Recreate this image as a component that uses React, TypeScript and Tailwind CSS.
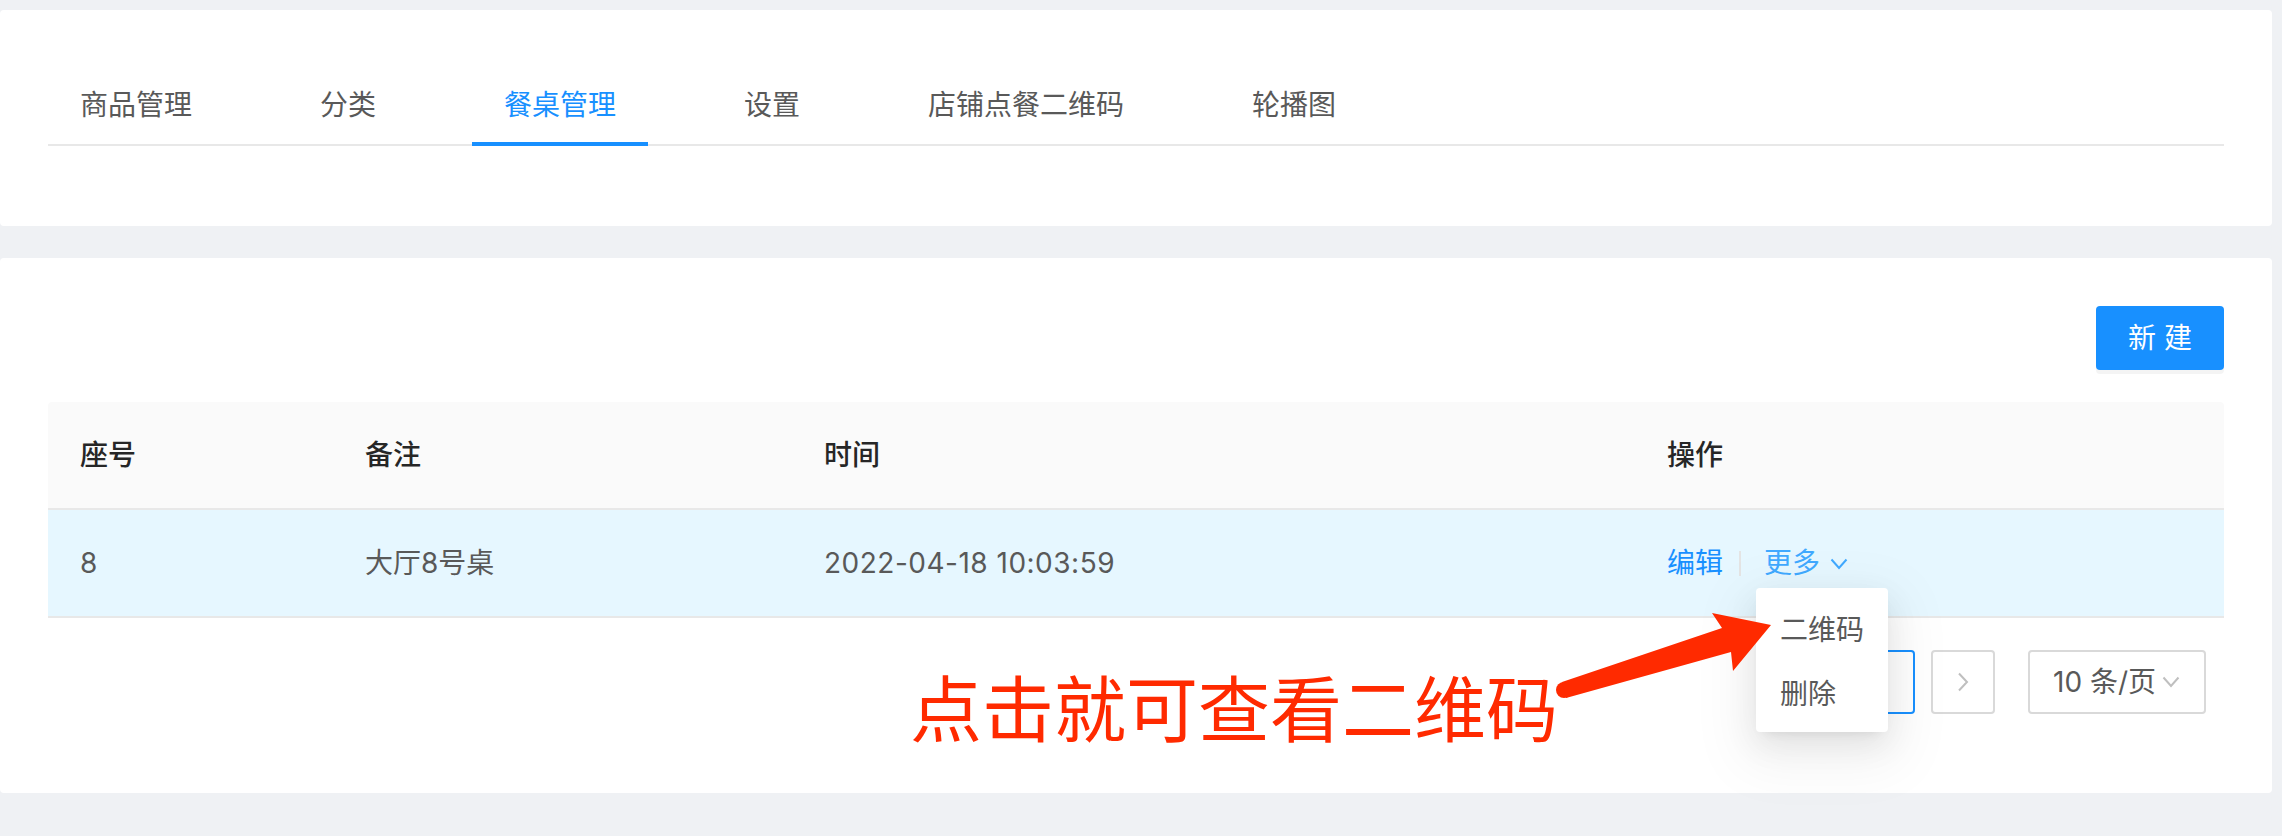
import clsx from "clsx";

const tabs = ["商品管理", "分类", "餐桌管理", "设置", "店铺点餐二维码", "轮播图"];

const rows = [{ seat: "8", note: "大厅8号桌", time: "2022-04-18 10:03:59" }];

const cols = "grid grid-cols-[285px_459px_843px_1fr]";

function ChevronDown({ color, className }: { color: string; className?: string }) {
  return (
    <svg width="18" height="12" viewBox="0 0 18 12" className={className}>
      <path d="M1.5 1.5 L9 10 L16.5 1.5" fill="none" stroke={color} strokeWidth="2" />
    </svg>
  );
}

export default function App() {
  const active = 2;

  return (
    <div className="relative min-h-screen w-full bg-[#eff1f4] pt-[10px] pr-[10px] font-['Inter','Noto_Sans_CJK_SC',sans-serif] text-[28px] leading-[44px]">
      {/* tabs card */}
      <div className="rounded-[4px] bg-white px-[48px] pt-[48px] pb-[80px]">
        <div className="flex border-b-2 border-[#e8e8e8]">
          {tabs.map((t, i) => (
            <div
              key={t}
              className={clsx(
                "relative px-[32px] pt-[23px] pb-[19px] font-['Noto_Sans_CJK_SC',sans-serif]",
                i < tabs.length - 1 && "mr-[64px]",
                i === active ? "text-[#1890ff]" : "text-[#595959]"
              )}
            >
              {t}
              {i === active && (
                <div className="absolute right-0 -bottom-[2px] left-0 h-[4px] bg-[#1890ff]" />
              )}
            </div>
          ))}
        </div>
      </div>

      {/* table card */}
      <div className="mt-[32px] rounded-[4px] bg-white px-[48px] pt-[48px] pb-[79px]">
        <div className="flex justify-end">
          <button className="flex h-[64px] w-[128px] items-center justify-center rounded-[4px] bg-[#1890ff] text-white shadow-[0_4px_0_rgba(0,0,0,0.045)]">
            新 建
          </button>
        </div>

        <div className="mt-[32px]">
          <div className={clsx(cols, "rounded-t-[4px] border-b-2 border-[#e8e8e8] bg-[#fafafa] font-medium text-[#262626]")}>
            <div className="px-[32px] py-[31px]">座号</div>
            <div className="px-[32px] py-[31px]">备注</div>
            <div className="px-[32px] py-[31px]">时间</div>
            <div className="px-[32px] py-[31px]">操作</div>
          </div>
          {rows.map((r) => (
            <div key={r.seat} className={clsx(cols, "border-b-2 border-[#e8e8e8] bg-[#e6f7ff] text-[#595959]")}>
              <div className="px-[32px] py-[31px]">{r.seat}</div>
              <div className="px-[32px] py-[31px]">{r.note}</div>
              <div className="px-[32px] py-[31px] tracking-[0.5px]">{r.time}</div>
              <div className="flex items-center px-[32px] py-[31px]">
                <span className="text-[#1890ff]">编辑</span>
                <span className="mx-[16px] h-[25px] w-[2px] bg-[#e4e4e4]" />
                <span className="ml-[7px] flex items-center text-[#40a9ff]">
                  更多
                  <ChevronDown color="#40a9ff" className="ml-[10px] mt-[2px]" />
                </span>
              </div>
            </div>
          ))}
        </div>

        {/* pagination */}
        <div className="mt-[32px] flex items-center justify-end pr-[18px] text-[#595959]">
          <div className="mr-[16px] flex h-[64px] w-[64px] items-center justify-center rounded-[4px] border-2 border-[#d9d9d9]">
            <svg width="12" height="20" viewBox="0 0 12 20">
              <path d="M10 1.5 L2 10 L10 18.5" fill="none" stroke="#bfbfbf" strokeWidth="2" />
            </svg>
          </div>
          <div className="mr-[16px] flex h-[64px] w-[64px] items-center justify-center rounded-[4px] border-2 border-[#1890ff] text-[#1890ff]">
            1
          </div>
          <div className="flex h-[64px] w-[64px] items-center justify-center rounded-[4px] border-2 border-[#d9d9d9]">
            <svg width="12" height="20" viewBox="0 0 12 20">
              <path d="M2 1.5 L10 10 L2 18.5" fill="none" stroke="#bfbfbf" strokeWidth="2" />
            </svg>
          </div>
          <div className="ml-[33px] flex h-[64px] w-[178px] items-center rounded-[4px] border-2 border-[#d9d9d9] pl-[23px]">
            <span>10 条/页</span>
            <ChevronDown color="#bfbfbf" className="ml-[6px]" />
          </div>
        </div>
      </div>

      {/* open dropdown */}
      <div className="absolute top-[588px] left-[1756px] w-[132px] rounded-[4px] bg-white py-[8px] text-[#595959] shadow-[0_6px_12px_-8px_rgba(0,0,0,0.12),0_12px_32px_0_rgba(0,0,0,0.08),0_18px_56px_16px_rgba(0,0,0,0.05)]">
        <div className="px-[24px] py-[10px] font-['Noto_Sans_CJK_SC',sans-serif]">二维码</div>
        <div className="px-[24px] py-[10px] font-['Noto_Sans_CJK_SC',sans-serif]">删除</div>
      </div>

      {/* annotation */}
      <div className="absolute top-[669px] left-[910px] whitespace-nowrap font-['Noto_Sans_CJK_SC',sans-serif] text-[72px] leading-[72px] text-[#ff2a00]">
        点击就可查看二维码
      </div>
      <svg className="pointer-events-none absolute top-[600px] left-[1550px]" width="230" height="110" viewBox="0 0 230 110">
        <circle cx="14" cy="90" r="8" fill="#ff2a00" />
        <polygon
          points="12,82 172,28 162,13 221,25 183,71 181,52 16,98"
          fill="#ff2a00"
        />
      </svg>
    </div>
  );
}
